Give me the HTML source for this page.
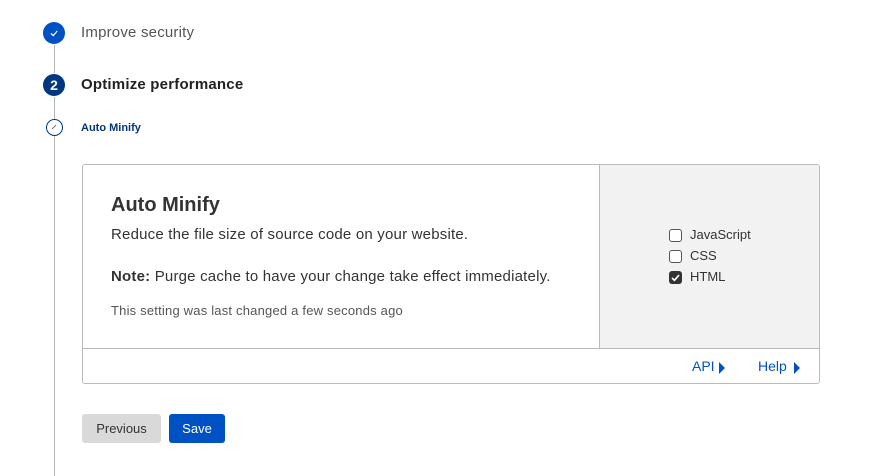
<!DOCTYPE html>
<html><head><style>
body{margin:0;width:890px;height:476px;background:#fff;font-family:"Liberation Sans",sans-serif;position:relative;overflow:hidden;color:#333}
.a{position:absolute}
.line{position:absolute;left:54px;width:1px;background:#b8b8b8}
</style></head><body>
<div class="line" style="top:45px;height:28px"></div>
<div class="line" style="top:97px;height:22px"></div>
<div class="line" style="top:136px;height:340px"></div>
<div class="a" style="left:43px;top:22px;width:22px;height:22px;border-radius:50%;background:#0051c3"></div>
<svg class="a" style="left:48px;top:27px" width="12" height="12"><path d="M3 6.5 L5.3 8.6 L9.2 4" stroke="#fff" stroke-width="1.2" fill="none"/></svg>
<div class="a" style="left:81px;top:24px;font-size:15px;color:#555;letter-spacing:0.2px">Improve security</div>
<div class="a" style="left:43px;top:74px;width:22px;height:22px;border-radius:50%;background:#003682;color:#fff;font-weight:bold;font-size:14px;text-align:center;line-height:22px">2</div>
<div class="a" style="left:81px;top:76px;font-size:15px;font-weight:bold;color:#222;letter-spacing:0.2px">Optimize performance</div>
<div class="a" style="left:46px;top:119px;width:15px;height:15px;border-radius:50%;border:1px solid #003682;background:#fff"></div>
<svg class="a" style="left:49px;top:122px" width="10" height="10"><path d="M3 7 L7 3" stroke="#777" stroke-width="1" fill="none"/></svg>
<div class="a" style="left:81px;top:122px;font-size:11px;font-weight:bold;color:#003682">Auto Minify</div>
<div class="a" style="left:82px;top:164px;width:736px;height:218px;border:1px solid #bbb;border-radius:3px;overflow:hidden">
  <div class="a" style="left:516px;top:0;width:220px;height:183px;background:#f2f2f2;border-left:1px solid #bbb"></div>
  <div class="a" style="left:0;top:183px;width:736px;height:1px;background:#bbb"></div>
  <div class="a" style="left:28px;top:29px;font-size:20px;font-weight:bold;color:#333">Auto Minify</div>
  <div class="a" style="left:28px;top:61px;font-size:15px;letter-spacing:0.2px">Reduce the file size of source code on your website.</div>
  <div class="a" style="left:28px;top:103px;font-size:15px;letter-spacing:0.2px"><b>Note:</b> Purge cache to have your change take effect immediately.</div>
  <div class="a" style="left:28px;top:138px;font-size:13px;color:#555;letter-spacing:0.2px">This setting was last changed a few seconds ago</div>
  <div class="a" style="left:586px;top:64px;width:11px;height:11px;border:1px solid #555;border-radius:3px;background:#fff"></div>
  <div class="a" style="left:607px;top:62px;font-size:13px">JavaScript</div>
  <div class="a" style="left:586px;top:85px;width:11px;height:11px;border:1px solid #555;border-radius:3px;background:#fff"></div>
  <div class="a" style="left:607px;top:83px;font-size:13px">CSS</div>
  <div class="a" style="left:586px;top:106px;width:13px;height:13px;border-radius:3px;background:#333"></div>
  <svg class="a" style="left:586px;top:106px" width="13" height="13"><path d="M3 7 L5.5 9.3 L10 4" stroke="#fff" stroke-width="1.6" fill="none"/></svg>
  <div class="a" style="left:607px;top:104px;font-size:13px">HTML</div>
  <div class="a" style="left:609px;top:193px;font-size:14px;color:#0051c3">API</div>
  <svg class="a" style="left:636px;top:197px" width="8" height="12"><path d="M0 0 L6 6 L0 12Z" fill="#0051c3"/></svg>
  <div class="a" style="left:675px;top:193px;font-size:14px;color:#0051c3">Help</div>
  <svg class="a" style="left:711px;top:197px" width="8" height="12"><path d="M0 0 L6 6 L0 12Z" fill="#0051c3"/></svg>
</div>
<div class="a" style="left:82px;top:414px;width:79px;height:29px;border-radius:3px;background:#d9d9d9;font-size:13px;color:#333;text-align:center;line-height:29px">Previous</div>
<div class="a" style="left:169px;top:414px;width:56px;height:29px;border-radius:3px;background:#0051c3;font-size:13px;color:#fff;text-align:center;line-height:29px">Save</div>
</body></html>
